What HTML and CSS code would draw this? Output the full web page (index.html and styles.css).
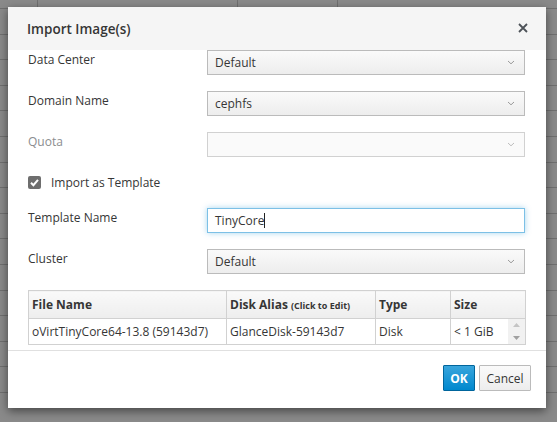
FILE: index.html
```html
<!DOCTYPE html>
<html>
<head>
<meta charset="utf-8">
<link rel="stylesheet" href="styles.css">
</head>
<body>
<div class="page">
  <div class="bgtable">
    <div class="bgrow first"><div class="c c0"></div><div class="c c1"></div><div class="c c2"></div><div class="c c3"></div></div>
    <div class="bgrow"><div class="c c0"></div><div class="c c1"></div><div class="c c2"></div><div class="c c3"></div></div>
    <div class="bgrow"><div class="c c0"></div><div class="c c1"></div><div class="c c2"></div><div class="c c3"></div></div>
    <div class="bgrow"><div class="c c0"></div><div class="c c1"></div><div class="c c2"></div><div class="c c3"></div></div>
    <div class="bgrow"><div class="c c0"></div><div class="c c1"></div><div class="c c2"></div><div class="c c3"></div></div>
    <div class="bgrow"><div class="c c0"></div><div class="c c1"></div><div class="c c2"></div><div class="c c3"></div></div>
    <div class="bgrow"><div class="c c0"></div><div class="c c1"></div><div class="c c2"></div><div class="c c3"></div></div>
    <div class="bgrow"><div class="c c0"></div><div class="c c1"></div><div class="c c2"></div><div class="c c3"></div></div>
    <div class="bgrow"><div class="c c0"></div><div class="c c1"></div><div class="c c2"></div><div class="c c3"></div></div>
    <div class="bgrow"><div class="c c0"></div><div class="c c1"></div><div class="c c2"></div><div class="c c3"></div></div>
    <div class="bgrow"><div class="c c0"></div><div class="c c1"></div><div class="c c2"></div><div class="c c3"></div></div>
    <div class="bgrow"><div class="c c0"></div><div class="c c1"></div><div class="c c2"></div><div class="c c3"></div></div>
    <div class="bgrow"><div class="c c0"></div><div class="c c1"></div><div class="c c2"></div><div class="c c3"></div></div>
    <div class="bgrow"><div class="c c0"></div><div class="c c1"></div><div class="c c2"></div><div class="c c3"></div></div>
    <div class="bgrow"><div class="c c0"></div><div class="c c1"></div><div class="c c2"></div><div class="c c3"></div></div>
    <div class="bgrow"><div class="c c0"></div><div class="c c1 bgtext">Disk</div><div class="c c2 bgtext"><span class="bglink">1</span> GiB</div><div class="c c3"></div></div>
  </div>
  <div class="backdrop"></div>
  <div class="modal">
    <div class="modal-header">
      <h1 class="title">Import Image(s)</h1>
      <svg class="close" width="10" height="10" viewBox="0 0 10 10"><path d="M1 1 L9 9 M9 1 L1 9" stroke="#4d5258" stroke-width="1.8" fill="none"/></svg>
    </div>
    <div class="modal-body">
      <div class="form-row">
        <div class="label">Data Center</div>
        <div class="select"><span>Default</span><svg class="chev" width="8" height="5" viewBox="0 0 8 5"><path d="M1 1 L4 3.8 L7 1" stroke="#9a9a9a" stroke-width="1" fill="none"/></svg></div>
      </div>
      <div class="form-row">
        <div class="label">Domain Name</div>
        <div class="select"><span>cephfs</span><svg class="chev" width="8" height="5" viewBox="0 0 8 5"><path d="M1 1 L4 3.8 L7 1" stroke="#9a9a9a" stroke-width="1" fill="none"/></svg></div>
      </div>
      <div class="form-row">
        <div class="label disabled">Quota</div>
        <div class="select is-disabled"><span></span><svg class="chev" width="8" height="5" viewBox="0 0 8 5"><path d="M1 1 L4 3.8 L7 1" stroke="#bdbdbd" stroke-width="1" fill="none"/></svg></div>
      </div>
      <div class="check-row">
        <span class="checkbox"><svg width="13" height="13" viewBox="0 0 13 13"><path d="M3 6.8 L5.4 9.2 L10 3.8" stroke="#fff" stroke-width="2" fill="none"/></svg></span>
        <span class="check-label">Import as Template</span>
      </div>
      <div class="form-row">
        <div class="label">Template Name</div>
        <div class="input"><span>TinyCore</span><span class="caret"></span></div>
      </div>
      <div class="form-row">
        <div class="label">Cluster</div>
        <div class="select"><span>Default</span><svg class="chev" width="8" height="5" viewBox="0 0 8 5"><path d="M1 1 L4 3.8 L7 1" stroke="#9a9a9a" stroke-width="1" fill="none"/></svg></div>
      </div>
      <table class="grid">
        <thead>
          <tr>
            <th class="col-file">File Name</th>
            <th class="col-alias">Disk Alias <small>(Click to Edit)</small></th>
            <th class="col-type">Type</th>
            <th class="col-size">Size</th>
          </tr>
        </thead>
        <tbody>
          <tr>
            <td>oVirtTinyCore64-13.8 (59143d7)</td>
            <td>GlanceDisk-59143d7</td>
            <td>Disk</td>
            <td class="size-cell"><div class="size-wrap"><span class="size-text">&lt; 1 GiB</span><span class="scrollbar"><svg width="7" height="4" viewBox="0 0 7 4"><path d="M0 4 L3.5 0 L7 4 Z" fill="#c4c4c4"/></svg><svg width="7" height="4" viewBox="0 0 7 4"><path d="M0 0 L3.5 4 L7 0 Z" fill="#a0a0a0"/></svg></span></div></td>
          </tr>
        </tbody>
      </table>
    </div>
    <div class="modal-footer">
      <button class="btn btn-primary">OK</button>
      <button class="btn btn-default">Cancel</button>
    </div>
  </div>
</div>
</body>
</html>
```
FILE: styles.css
```css
html, body {
  margin: 0;
  padding: 0;
}
body {
  font-family: "Open Sans", "Liberation Sans", sans-serif;
  font-size: 12px;
  color: #363636;
  background: #fff;
}
.page {
  position: relative;
  width: 557px;
  height: 422px;
  overflow: hidden;
}
.bgtable {
  display: flex;
  flex-direction: column;
}
.bgrow {
  display: flex;
  height: 24.6px;
  border-bottom: 1px solid #cfcfcf;
  flex-shrink: 0;
}
.bgrow.first {
  height: 8px;
}
.c {
  border-right: 1px solid #cfcfcf;
  box-sizing: border-box;
}
.c0 { width: 38px; }
.c1 { width: 200px; }
.c2 { width: 100px; }
.c3 { flex: 1; border-right: none; }
.bgtext {
  padding: 8px 0 0 5px;
  font-size: 12px;
  color: #363636;
}
.bglink { color: #0088ce; }
.backdrop {
  position: absolute;
  inset: 0;
  background: rgba(0, 0, 0, 0.46);
}
.modal {
  position: absolute;
  left: 8px;
  top: 7px;
  width: 538px;
  height: 401px;
  background: #fff;
  box-shadow: 0 3px 9px rgba(0, 0, 0, 0.5);
  display: flex;
  flex-direction: column;
}
.modal-header {
  height: 43px;
  background: #f5f5f5;
  display: flex;
  align-items: center;
  justify-content: space-between;
  padding: 0 18px 0 19px;
  flex-shrink: 0;
}
.title {
  margin: 0;
  font-size: 13.5px;
  font-weight: 600;
  color: #363636;
}
.close {
  display: block;
  margin-top: -2px;
}
.modal-body {
  flex: 1;
  display: flex;
  flex-direction: column;
  gap: 16px;
  padding: 0 20px 5px 20px;
}
.form-row {
  display: flex;
  align-items: flex-start;
  height: 25px;
}
.label {
  width: 179px;
  line-height: 17px;
  padding-top: 1px;
  color: #363636;
}
.label.disabled {
  color: #8b8d8f;
}
.select {
  width: 318px;
  height: 25px;
  box-sizing: border-box;
  border: 1px solid #bbb;
  background: linear-gradient(to bottom, #fafafa 0%, #ededed 100%);
  display: flex;
  align-items: center;
  justify-content: space-between;
  padding: 0 9px 0 7px;
  color: #363636;
}
.select.is-disabled {
  background: #fafafa;
  border-color: #d1d1d1;
}
.chev { display: block; }
.check-row {
  display: flex;
  align-items: center;
  height: 19px;
  gap: 10px;
}
.checkbox {
  width: 13px;
  height: 13px;
  background: #6e6e6e;
  border-radius: 2px;
  display: block;
}
.checkbox svg { display: block; }
.check-label {
  color: #363636;
  margin-top: -1px;
}
.input {
  width: 318px;
  height: 25px;
  box-sizing: border-box;
  border: 1px solid #7cc0e6;
  box-shadow: 0 0 6px rgba(0, 136, 206, 0.35);
  background: #fff;
  display: flex;
  align-items: center;
  padding: 0 7px;
  color: #363636;
}
.caret {
  display: inline-block;
  width: 1px;
  height: 15px;
  background: #222;
}
.grid {
  border-collapse: collapse;
  width: 498px;
  font-size: 12px;
  table-layout: fixed;
}
.grid th, .grid td {
  border: 1px solid #d1d1d1;
  text-align: left;
  padding: 0 3px;
  white-space: nowrap;
  overflow: hidden;
}
.grid th {
  height: 28px;
  font-weight: 700;
  background: linear-gradient(to bottom, #fafafa 0%, #ededed 100%);
  color: #363636;
}
.grid th small {
  font-size: 9px;
  font-weight: 700;
}
.grid td {
  height: 25px;
  color: #363636;
}
.col-file { width: 198px; box-sizing: border-box; }
.col-alias { width: 149px; box-sizing: border-box; }
.col-type { width: 75px; box-sizing: border-box; }
.col-size { box-sizing: border-box; }
.grid td.size-cell {
  padding: 0 0 0 3px;
}
.size-wrap {
  display: flex;
  align-items: center;
  justify-content: space-between;
  height: 25px;
}
.scrollbar {
  width: 17px;
  height: 25px;
  background: #f1f1f1;
  display: flex;
  flex-direction: column;
  align-items: center;
  justify-content: space-between;
  padding: 4px 0;
  box-sizing: border-box;
}
.scrollbar svg { display: block; }
.modal-footer {
  border-top: 1px solid #e0e0e0;
  display: flex;
  justify-content: flex-end;
  gap: 4px;
  padding: 14px 15px 17px 0;
  flex-shrink: 0;
}
.btn {
  height: 26px;
  font-family: "Open Sans", "Liberation Sans", sans-serif;
  font-size: 12px;
  padding: 0 6px;
  border-radius: 1px;
  cursor: pointer;
}
.btn-primary {
  width: 32px;
  color: #fff;
  font-weight: 700;
  border: 1px solid #00659c;
  background: linear-gradient(to bottom, #39a5dc 0%, #0088ce 100%);
}
.btn-default {
  width: 52px;
  color: #363636;
  border: 1px solid #bbb;
  background: linear-gradient(to bottom, #fafafa 0%, #ededed 100%);
}
```
